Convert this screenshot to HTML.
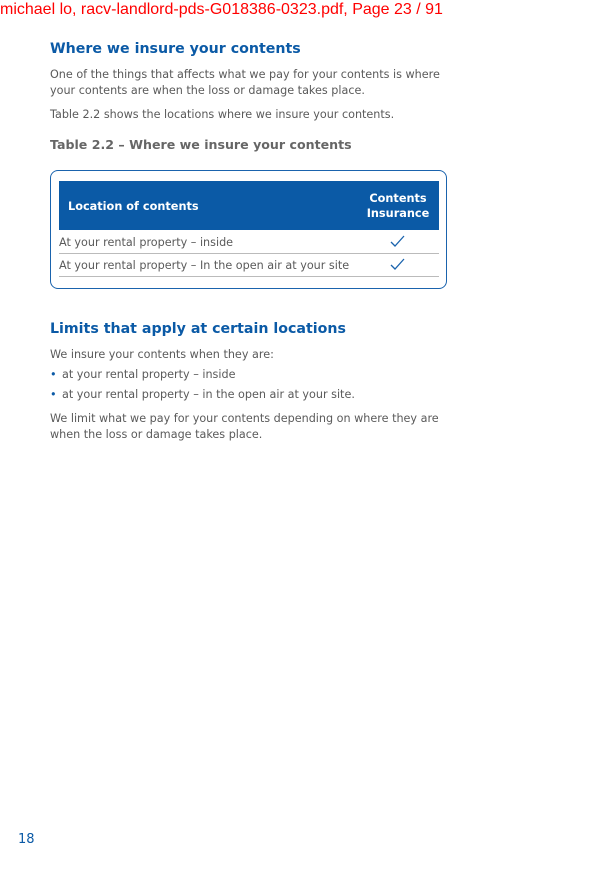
<!DOCTYPE html>
<html><head><style>
body{margin:0;width:612px;height:869px;background:#fff;position:relative;font-family:"DejaVu Sans","Liberation Sans",sans-serif;color:#555;overflow:hidden}
.a{position:absolute;white-space:nowrap}
.h{color:#0b5aa6;font-weight:bold;font-size:14.2px}
.p{font-size:11.2px;color:#5a5a5a}
</style></head><body>
<div class="a" style="left:0;top:1px;font-family:'Liberation Sans',sans-serif;font-size:16px;color:#f00">michael lo, racv-landlord-pds-G018386-0323.pdf, Page 23 / 91</div>
<div class="a h" style="left:50px;top:41px">Where we insure your contents</div>
<div class="a p" style="left:50px;top:68px">One of the things that affects what we pay for your contents is where</div>
<div class="a p" style="left:50px;top:84px">your contents are when the loss or damage takes place.</div>
<div class="a p" style="left:50px;top:108px">Table 2.2 shows the locations where we insure your contents.</div>
<div class="a" style="left:50px;top:137px;font-size:12.6px;font-weight:bold;color:#666">Table 2.2 – Where we insure your contents</div>
<div class="a" style="left:50px;top:170px;width:395px;height:117px;border:1.5px solid #1a63ad;border-radius:8px"></div>
<div class="a" style="left:59px;top:181px;width:380px;height:49px;background:#0b5aa6"></div>
<div class="a" style="left:68px;top:200px;color:#fff;font-weight:bold;font-size:11.3px">Location of contents</div>
<div class="a" style="left:356px;top:191px;width:84px;text-align:center;color:#fff;font-weight:bold;font-size:11.3px;line-height:15px">Contents<br>Insurance</div>
<div class="a p" style="left:59px;top:236px">At your rental property – inside</div>
<div class="a" style="left:59px;top:253px;width:380px;height:1px;background:#bbb"></div>
<div class="a p" style="left:59px;top:259px">At your rental property – In the open air at your site</div>
<div class="a" style="left:59px;top:276px;width:380px;height:1px;background:#bbb"></div>
<svg class="a" style="left:390px;top:234px" width="16" height="14"><path d="M1 8 L5 12 L14 2" fill="none" stroke="#1a63ad" stroke-width="1.3"/></svg>
<svg class="a" style="left:390px;top:257px" width="16" height="14"><path d="M1 8 L5 12 L14 2" fill="none" stroke="#1a63ad" stroke-width="1.3"/></svg>
<div class="a h" style="left:50px;top:321px">Limits that apply at certain locations</div>
<div class="a p" style="left:50px;top:348px">We insure your contents when they are:</div>
<div class="a p" style="left:50px;top:368px;color:#0b5aa6">•</div><div class="a p" style="left:62px;top:368px">at your rental property – inside</div>
<div class="a p" style="left:50px;top:388px;color:#0b5aa6">•</div><div class="a p" style="left:62px;top:388px">at your rental property – in the open air at your site.</div>
<div class="a p" style="left:50px;top:412px">We limit what we pay for your contents depending on where they are</div>
<div class="a p" style="left:50px;top:428px">when the loss or damage takes place.</div>
<div class="a" style="left:18px;top:832px;font-size:13px;color:#0b5aa6">18</div>
</body></html>
